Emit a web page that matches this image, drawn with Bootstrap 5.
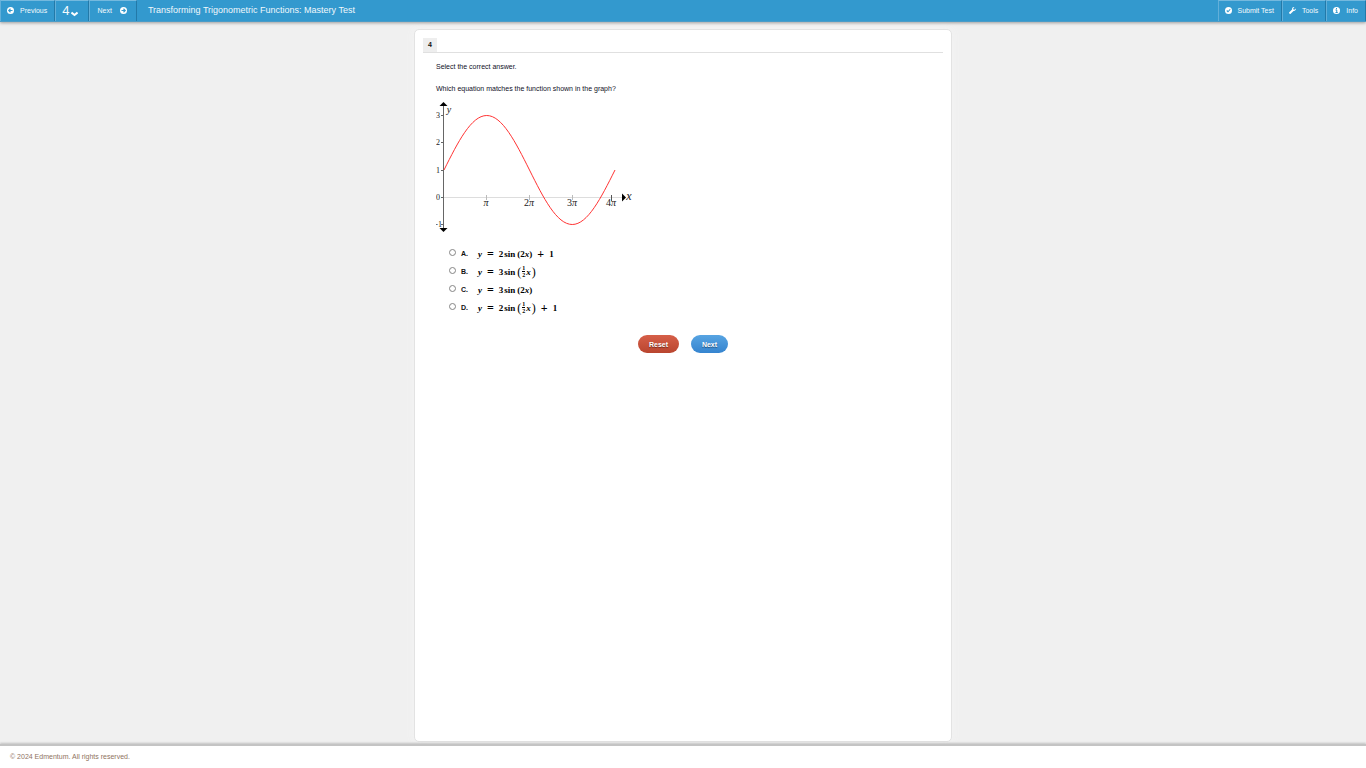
<!DOCTYPE html>
<html lang="en">
<head>
<meta charset="utf-8">
<meta name="viewport" content="width=device-width, initial-scale=1">
<title>Transforming Trigonometric Functions: Mastery Test</title>
<link href="https://cdn.jsdelivr.net/npm/bootstrap@5.3.0/dist/css/bootstrap.min.css" rel="stylesheet">
<style>
body { font: 7px/10px "Liberation Sans", Arial, sans-serif; background: #f0f0f0; color: #222; }
.topbar { height: 22px; background: #3399ce; border-bottom: 1px solid #4a9cc8; box-shadow: 0 1px 3px rgba(0,0,0,.35); color: #fff; z-index: 1; }
.tool { font-size: 7px; line-height: 10px; color: #f4fafd; background: #3399ce; border: 0; border-top: 1px solid #74b9de; border-left: 1px solid #62afd9; border-right: 1px solid #2379a8; padding: 0 7px 1px 6px; gap: 6px; }
.tool svg { width: 7px; height: 7px; flex: none; }
.page-no { font-size: 13px; padding: 0 10px 0 6px; gap: 2px; }
.tool-next { padding: 0 9px 1px 7px; gap: 8px; }
.test-title { font-size: 9px; line-height: 21px; font-weight: 400; color: #f0f8fc; margin-left: 11px; }
.sheet { width: 100%; max-width: 538px; background: #fff; border: 1px solid #e3e3e3; border-radius: 5px; margin: 7px 0 2px; padding: 8px; box-shadow: 0 0 10px #f4f4f4; }
.item-head { border-bottom: 1px solid #e0e0e0; }
.item-no { width: 14px; height: 14px; line-height: 14px; background: #eee; color: #111; }
.item-body { padding: 8px 13px 0; }
.item-body p { line-height: 11px; color: #101028; }
.item-body p + p { margin-top: 11px; }
.graph { display: block; width: 200px; height: 132px; margin-top: 7px; }
.graph text { font-family: "Liberation Serif", serif; fill: #222; }
.choices { margin-top: 11px; padding-left: 13px; }
.choice { height: 18px; }
.choice input { appearance: none; width: 7px; height: 7px; border: 1px solid #858585; border-radius: 50%; background: #fff; margin: 0 5px 2px 0; }
.choice input:checked { background: #3584cf; box-shadow: inset 0 0 0 1px #fff; }
.letter { width: 17px; color: #111; }
.choice label { padding-top: 1px; }
.eq { font: bold 9px/12px "Liberation Serif", serif; color: #000; gap: 1px; }
.eq .op { font-size: 12px; margin: 0 4px; line-height: 12px; }
.eq .half { font-size: 6px; line-height: 6px; }
.eq .half span:first-child { border-bottom: 1px solid #000; }
.eq .tall { font-size: 12px; font-weight: 400; }
.eq .arg { margin-left: 1px; }
.actions { margin-top: 19px; gap: 12px; }
.pill { height: 18px; border: 0; border-radius: 9px; color: #fff; font: bold 7px/19px "Liberation Sans", Arial, sans-serif; text-shadow: 0 1px 1px rgba(0,0,0,.45); }
.pill-reset { width: 41px; background: linear-gradient(#d65f48, #b9452f); }
.pill-next { width: 37px; background: linear-gradient(#57a4e2, #3584cf); }
.foot { height: 24px; border-top: 2px solid #c4c4c4; box-shadow: 0 -1px 2px rgba(0,0,0,.2); background: #fff; color: #8f7361; padding: 6px 10px; }
</style>
</head>
<body class="d-flex flex-column min-vh-100">
<header class="topbar d-flex position-relative">
  <nav class="d-flex" aria-label="Questions">
    <button class="tool d-flex align-items-center" type="button">
      <svg viewBox="0 0 14 14"><circle cx="7" cy="7" r="7" fill="#fff"/><path d="M11 7H4M7 3.5L3.5 7 7 10.500" fill="none" stroke="#3399ce" stroke-width="2.200"/></svg>Previous</button>
    <button class="tool page-no d-flex align-items-center" type="button">4 <svg class="mt-1" viewBox="0 0 14 14"><path d="M1 5L7 10l6-5" fill="none" stroke="#fff" stroke-width="4"/></svg></button>
    <button class="tool tool-next d-flex align-items-center" type="button">Next
      <svg viewBox="0 0 14 14"><circle cx="7" cy="7" r="7" fill="#fff"/><path d="M3 7h7M7 3.500L10.500 7 7 10.500" fill="none" stroke="#3399ce" stroke-width="2.200"/></svg></button>
  </nav>
  <h1 class="test-title mb-0 flex-grow-1">Transforming Trigonometric Functions: Mastery Test</h1>
  <nav class="d-flex" aria-label="Test tools">
    <button class="tool d-flex align-items-center" type="button">
      <svg viewBox="0 0 14 14"><circle cx="7" cy="7" r="7" fill="#fff"/><path d="M3.500 7l2.500 2.500L10.500 4.500" fill="none" stroke="#3399ce" stroke-width="2.200"/></svg>Submit Test</button>
    <button class="tool d-flex align-items-center" type="button">
      <svg viewBox="0 0 14 14"><path d="M13.700 3.200L11 5.500 8.700 5 8.300 2.800 10.800.3C8 -.4 5.600 2 6.200 5L.6 10.600a2 2 0 0 0 2.800 2.800L9 7.800c3 .6 5.400-1.700 4.700-4.600z" fill="#fff"/></svg>Tools</button>
    <button class="tool d-flex align-items-center" type="button">
      <svg viewBox="0 0 14 14"><circle cx="7" cy="7" r="7" fill="#fff"/><path d="M7 2v2.500M5 6h2.500v5M5 11h4.500" fill="none" stroke="#3399ce" stroke-width="2"/></svg>Info</button>
  </nav>
</header>

<main class="flex-grow-1 d-flex justify-content-center">
  <form class="sheet">
    <div class="item-head"><div class="item-no fw-bold text-center">4</div></div>
    <div class="item-body">
      <p class="mb-0">Select the correct answer.</p>
      <p class="mb-0">Which equation matches the function shown in the graph?</p>
      <svg class="graph" viewBox="0 0 200 132" role="img" aria-label="Graph of a sine curve">
        <path d="M8 96.500H186" stroke="#ddd"/>
        <path d="M50.500 94v5M93.500 94v5M136.500 94v5" stroke="#bbb"/>
        <path d="M175.500 94v6" stroke="#555"/>
        <path d="M7.500 4v124M5 14.500h3M5 41.500h3M5 69.500h3M5 96.500h3M5 123.500h3" stroke="#666" fill="none"/>
        <path d="M7.500 1l4 4h-8zM7.500 131l4-4h-8zM190 96.500l-4-4v8z"/>
        <path d="M8 69c13.900-27.900 27.300-54.500 42.750-54.500c15.400 0 28.800 26.600 42.750 54.500c13.900 27.900 27.300 54.500 42.750 54.500c15.400 0 28.800-26.600 42.750-54.500" fill="none" stroke="#f33" stroke-width="1"/>
        <g font-size="8" text-anchor="end">
          <text x="4" y="17">3</text><text x="4" y="44">2</text><text x="4" y="72">1</text><text x="4" y="99">0</text><text x="6" y="126">-1</text>
        </g>
        <g font-size="10" text-anchor="middle">
          <text x="50" y="105" font-style="italic">π</text>
          <text x="93" y="105">2<tspan font-style="italic">π</tspan></text>
          <text x="136" y="105">3<tspan font-style="italic">π</tspan></text>
          <text x="175" y="105">4<tspan font-style="italic">π</tspan></text>
          <text x="13" y="12" font-style="italic">y</text>
          <text x="193" y="99" font-size="12" font-style="italic">x</text>
        </g>
      </svg>
      <div class="choices">
        <div class="choice d-flex align-items-center"><input type="radio" name="answer" id="a"><label class="d-flex align-items-center" for="a"><b class="letter">A.</b><span class="eq d-flex align-items-center"><i>y</i><span class="op">=</span><span>2</span><span>sin</span><span class="arg">(2<i>x</i>)</span><span class="op">+</span><span>1</span></span></label></div>
        <div class="choice d-flex align-items-center"><input type="radio" name="answer" id="b"><label class="d-flex align-items-center" for="b"><b class="letter">B.</b><span class="eq d-flex align-items-center"><i>y</i><span class="op">=</span><span>3</span><span>sin</span><span class="tall arg">(</span><span class="half d-flex flex-column"><span>1</span><span>2</span></span><i>x</i><span class="tall">)</span></span></label></div>
        <div class="choice d-flex align-items-center"><input type="radio" name="answer" id="c"><label class="d-flex align-items-center" for="c"><b class="letter">C.</b><span class="eq d-flex align-items-center"><i>y</i><span class="op">=</span><span>3</span><span>sin</span><span class="arg">(2<i>x</i>)</span></span></label></div>
        <div class="choice d-flex align-items-center"><input type="radio" name="answer" id="d"><label class="d-flex align-items-center" for="d"><b class="letter">D.</b><span class="eq d-flex align-items-center"><i>y</i><span class="op">=</span><span>2</span><span>sin</span><span class="tall arg">(</span><span class="half d-flex flex-column"><span>1</span><span>2</span></span><i>x</i><span class="tall">)</span><span class="op">+</span><span>1</span></span></label></div>
      </div>
    </div>
    <div class="actions d-flex justify-content-center">
      <button class="pill pill-reset p-0" type="reset">Reset</button>
      <button class="pill pill-next p-0" type="button">Next</button>
    </div>
  </form>
</main>
<footer class="foot">© 2024 Edmentum. All rights reserved.</footer>
<script src="https://cdn.jsdelivr.net/npm/bootstrap@5.3.0/dist/js/bootstrap.bundle.min.js"></script>
</body>
</html>
